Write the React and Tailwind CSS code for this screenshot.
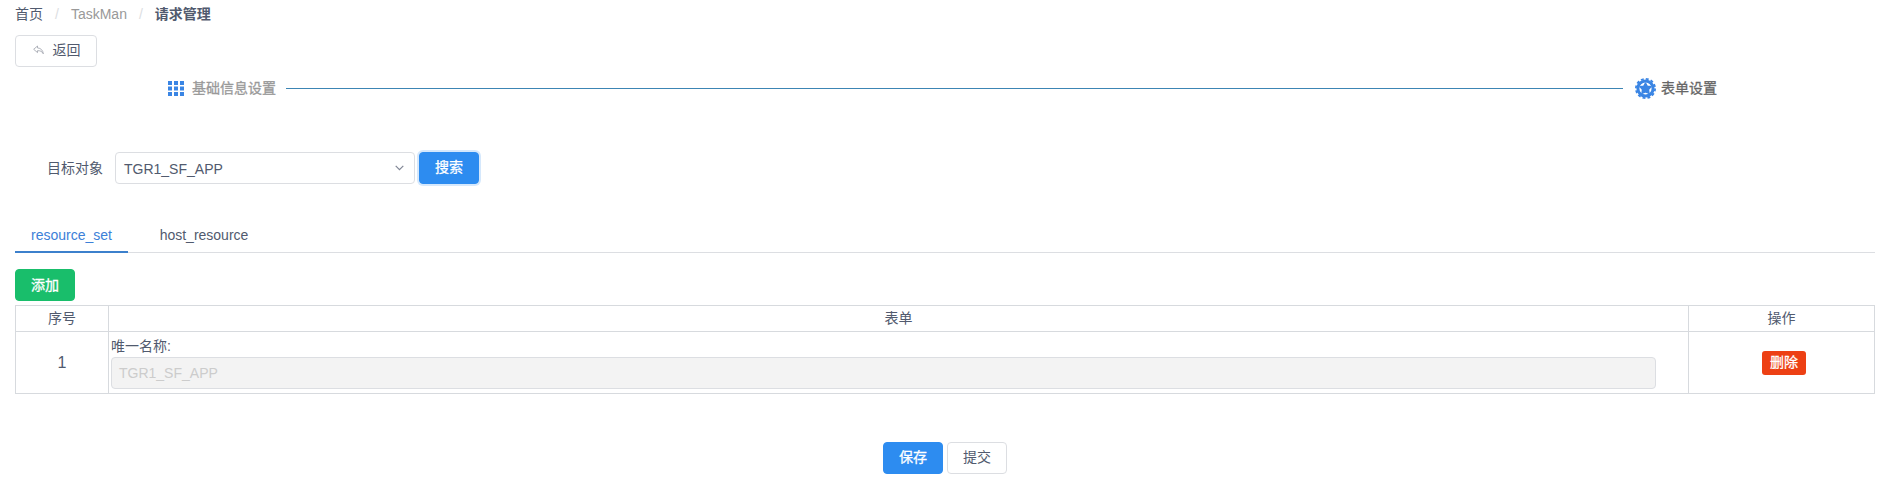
import React from "react";

const btn = "box-border flex h-8 items-center justify-center rounded border text-[14px] leading-none";

function GridIcon() {
  return (
    <svg className="h-[15px] w-4 shrink-0" viewBox="0 0 16 15" fill="#3a85e4">
      {[0, 6, 12].map((x) =>
        [0, 5.5, 11].map((y) => <rect key={`${x}-${y}`} x={x} y={y} width="4" height="4" />)
      )}
    </svg>
  );
}

function GearIcon() {
  return (
    <svg className="size-[21px] shrink-0" viewBox="-10.5 -10.5 21 21">
      <circle r="7.6" fill="none" stroke="#3a85e4" strokeWidth="3" />
      <circle r="9.6" fill="none" stroke="#3a85e4" strokeWidth="1.8" strokeDasharray="2.9 2.13" />
      <path d="M0-5.4 L1.8-2.2 L5.4-1.7 L3 1 L3.5 4.8 L0 3.4 L-3.5 4.8 L-3 1 L-5.4-1.7 L-1.8-2.2Z" fill="#3a85e4" stroke="#3a85e4" strokeWidth="1.4" strokeLinejoin="round" />
    </svg>
  );
}

function Row({ children, className = "" }) {
  return <div className={`flex items-center ${className}`}>{children}</div>;
}

export default function App() {
  return (
    <div className="h-[501px] w-[1889px] overflow-hidden bg-white pl-[15px] pr-[14px] font-['Liberation_Sans','Noto_Sans_CJK_SC',sans-serif] text-[14px] leading-[21px] text-[#515a6e]">
      <Row className="h-[35px] pb-[7px]">
        <span>首页</span>
        <span className="ml-3 mr-3 text-[#dcdee2]">/</span>
        <span className="text-[#999]">TaskMan</span>
        <span className="ml-3 mr-3 text-[#dcdee2]">/</span>
        <span className="font-bold">请求管理</span>
      </Row>

      <button className={`${btn} w-[82px] border-[#dcdee2] bg-white pb-[2px] pl-px`}>
        <svg className="mr-[9px] h-[10px] w-[11px]" viewBox="0 0 11 10" fill="none" stroke="#9a9ea8" strokeWidth="0.8" strokeLinejoin="round">
          <path d="M4.5 1 L.7 4.3 L4.5 7.6 V5.7 C7.3 5.6 9 6.3 10.3 8.8 C10 5.5 8 3.1 4.5 2.9Z" />
        </svg>
        返回
      </button>

      <Row className="h-[43px] pl-[153px] pr-[158px]">
        <GridIcon />
        <span className="ml-2 text-[#999] [-webkit-text-stroke:0.3px_#999]">基础信息设置</span>
        <div className="ml-[10px] mr-3 h-px flex-1 bg-[#3c85b4]" />
        <GearIcon />
        <span className="ml-[5px] text-[#666] [-webkit-text-stroke:0.3px_#666]">表单设置</span>
      </Row>

      <Row className="mt-[42px] h-8 pl-8">
        <span className="mr-3">目标对象</span>
        <div className="flex h-8 w-[300px] items-center justify-between rounded border border-[#dcdee2] pl-2 pr-[10px] pt-[2px]">
          <span>TGR1_SF_APP</span>
          <svg className="mb-[3px] h-[6px] w-[9px]" viewBox="0 0 9 6" fill="none" stroke="#808695" strokeWidth="1.2">
            <path d="M.7.8 L4.5 4.6 L8.3.8" />
          </svg>
        </div>
        <button className={`${btn} ml-1 w-[60px] border-[#2d8cf0] bg-[#2d8cf0] pb-[2px] text-white shadow-[0_0_0_2px_rgba(45,140,240,0.2)] [-webkit-text-stroke:0.3px_white]`}>搜索</button>
      </Row>

      <div className="mt-[33px] flex h-[36px] border-b border-[#dcdee2]">
        <div className="h-9 w-[113px] shrink-0 border-b-2 border-[#3c80cc] pt-2 text-center text-[#3c80d8]">resource_set</div>
        <div className="ml-4 h-[35px] w-[120px] pt-2 text-center">host_resource</div>
      </div>

      <button className={`${btn} mt-4 w-[60px] border-[#19be6b] bg-[#19be6b] text-white [-webkit-text-stroke:0.3px_white]`}>添加</button>

      <div className="mt-1 grid h-[89px] w-[1860px] grid-cols-[93px_1580px_1fr] grid-rows-[26px_1fr] border-l border-t border-[#d7dade] [&>div]:border-b [&>div]:border-r [&>div]:border-[#d7dade]">
        <div className="flex items-center justify-center">序号</div>
        <div className="flex items-center justify-center">表单</div>
        <div className="flex items-center justify-center">操作</div>
        <div className="flex items-center justify-center text-[16px]">1</div>
        <div className="pl-[2px] pt-1">
          <div className="h-[21px]">唯一名称:</div>
          <div className="flex h-8 w-[1545px] items-center rounded border border-[#dcdee2] bg-[#f3f3f3] pl-[7px] text-[#ccc]">TGR1_SF_APP</div>
        </div>
        <div className="flex items-center justify-center pl-[5px]">
          <button className="flex h-6 w-11 items-center justify-center rounded-[3px] bg-[#ed4014] pb-[2px] text-[14px] leading-none text-white [-webkit-text-stroke:0.3px_white]">删除</button>
        </div>
      </div>

      <Row className="mt-12 justify-center gap-1">
        <button className={`${btn} w-[60px] border-[#2d8cf0] bg-[#2d8cf0] pb-[2px] text-white [-webkit-text-stroke:0.3px_white]`}>保存</button>
        <button className={`${btn} w-[60px] border-[#dcdee2] bg-white pb-[2px]`}>提交</button>
      </Row>
    </div>
  );
}
